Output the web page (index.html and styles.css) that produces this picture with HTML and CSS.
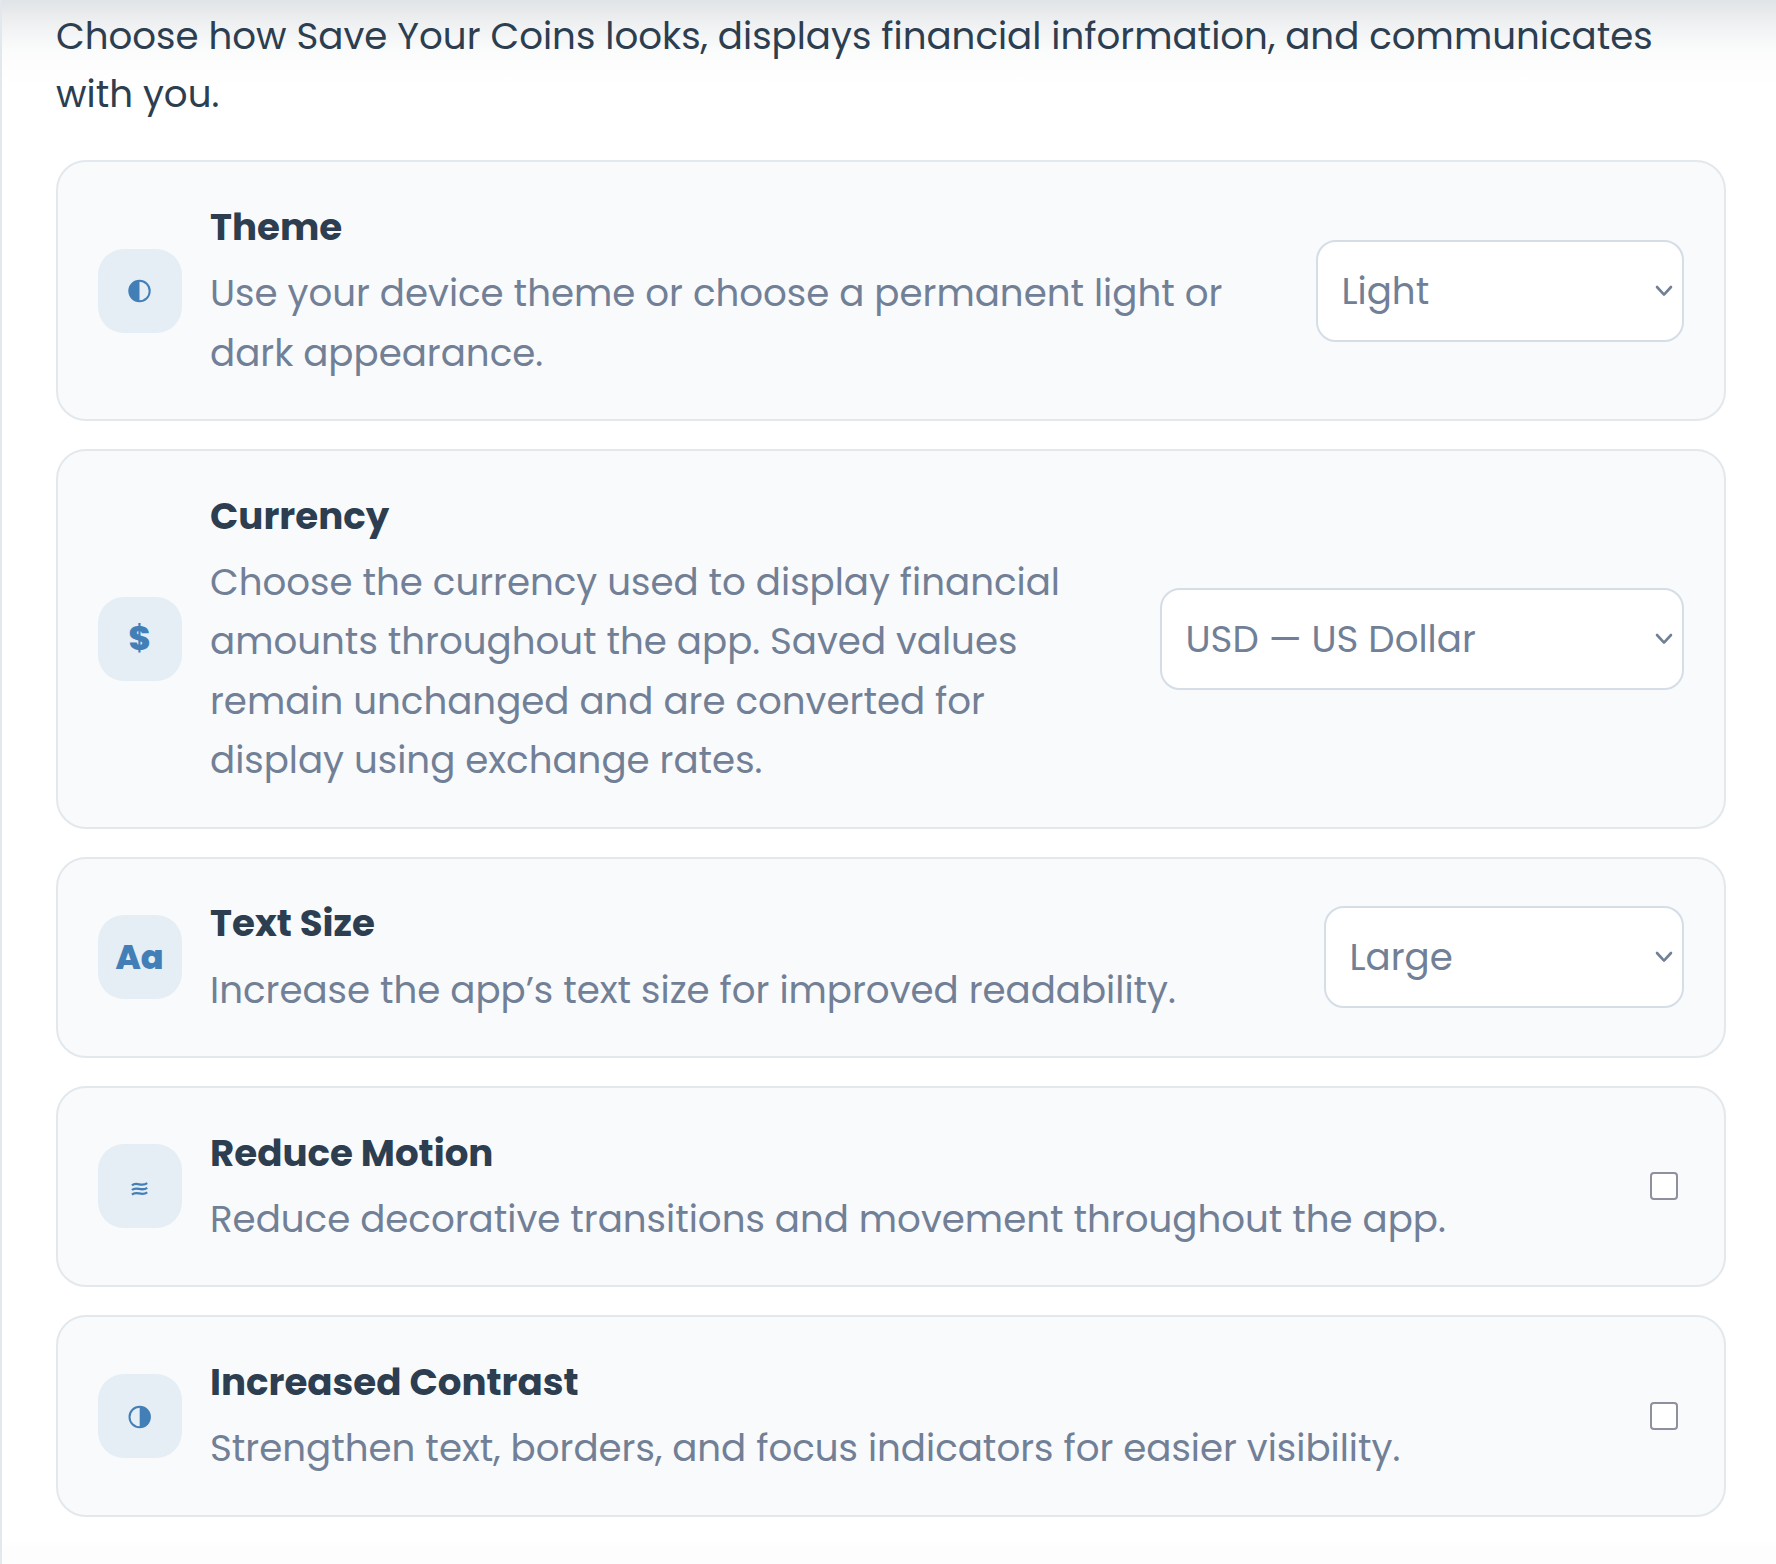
FILE: index.html
```html
<!DOCTYPE html>
<html lang="en">
<head>
<meta charset="utf-8" />
<title>Preferences - Save Your Coins</title>
<link rel="stylesheet" href="styles.css">
</head>
<body>
<main class="settings">
  <p class="intro">Choose how Save Your Coins looks, displays financial information, and communicates with you.</p>

  <section class="card">
    <span class="icon">
      <svg width="24" height="24" viewBox="0 0 24 24"><circle cx="11.5" cy="12" r="10.2" fill="none" stroke="currentColor" stroke-width="2"/><path d="M11.5 1.5a10.5 10.5 0 0 0 0 21z" fill="currentColor"/></svg>
    </span>
    <div class="text">
      <h2>Theme</h2>
      <p>Use your device theme or choose a permanent light or<br>dark appearance.</p>
    </div>
    <label class="select theme">
      <select><option>Light</option><option>Dark</option></select>
      <svg width="18" height="12" viewBox="0 0 18 12"><path d="M2 2l7 7.6L16 2" /></svg>
    </label>
  </section>

  <section class="card">
    <span class="icon letters">$</span>
    <div class="text">
      <h2>Currency</h2>
      <p>Choose the currency used to display financial<br>amounts throughout the app. Saved values<br>remain unchanged and are converted for<br>display using exchange rates.</p>
    </div>
    <label class="select currency">
      <select><option>USD — US Dollar</option></select>
      <svg width="18" height="12" viewBox="0 0 18 12"><path d="M2 2l7 7.6L16 2" /></svg>
    </label>
  </section>

  <section class="card">
    <span class="icon letters">Aa</span>
    <div class="text">
      <h2>Text Size</h2>
      <p>Increase the app’s text size for improved readability.</p>
    </div>
    <label class="select size">
      <select><option>Large</option></select>
      <svg width="18" height="12" viewBox="0 0 18 12"><path d="M2 2l7 7.6L16 2" /></svg>
    </label>
  </section>

  <section class="card">
    <span class="icon waves">
      <svg width="18" height="14" viewBox="0 0 18 14" fill="none" stroke="currentColor" stroke-width="2.3"><path d="M1 3.4C5.5-1 10.500 5.600 16.200 1.200M1 8C5.500 3.600 10.500 10.200 16.200 5.800M1 12.600C5.500 8.200 10.500 14.800 16.200 10.400"/></svg>
    </span>
    <div class="text">
      <h2>Reduce Motion</h2>
      <p>Reduce decorative transitions and movement throughout the app.</p>
    </div>
    <input type="checkbox">
  </section>

  <section class="card">
    <span class="icon low">
      <svg width="24" height="24" viewBox="0 0 24 24"><circle cx="11.7" cy="12" r="10.2" fill="none" stroke="currentColor" stroke-width="2"/><path d="M11.7 1.500a10.5 10.5 0 0 1 0 21z" fill="currentColor"/></svg>
    </span>
    <div class="text">
      <h2>Increased Contrast</h2>
      <p>Strengthen text, borders, and focus indicators for easier visibility.</p>
    </div>
    <input type="checkbox">
  </section>
</main>
</body>
</html>
```

FILE: styles.css
```css
* {
  box-sizing: border-box;
}
body {
  margin: 0;
  background: #fff;
  color: #2c3e50;
  font-family: Poppins, "Open Sans", sans-serif;
  font-size: 37.2px;
}
.settings {
  height: 1564px;
  overflow: hidden;
  padding: 8px 50px 0 54px;
  border-left: 2px solid #e2e8ec;
  background: linear-gradient(#e0e4e7 0, #e9ebec 14px, #f2f3f4 30px, #fafbfb 50px, #fdfdfd 64px, #fff 84px, #fff 1538px, #fdfdfd 1550px);
}
.intro {
  margin: 0 0 37px;
  line-height: 1.55;
}
.card {
  display: flex;
  align-items: center;
  gap: 28px;
  margin-bottom: 27.9px;
  padding: 35.6px 40px 35.9px;
  border: 2px solid #e2e8ec;
  border-radius: 30px;
  background: #f9fafc;
}
.icon {
  display: flex;
  align-items: center;
  justify-content: center;
  flex: none;
  width: 84px;
  height: 84px;
  border-radius: 26px;
  background: #e5edf5;
  color: #437fb7;
  font-size: 33.5px;
  font-weight: 800;
}
.letters {
  padding: 1px 1px 0 0;
}
.low {
  padding-top: 3px;
}
.waves {
  padding-top: 5px;
}
.text {
  flex: 1;
  min-width: 0;
  line-height: 1.6;
  white-space: nowrap;
}
.text h2 {
  margin: 0 0 6.8px;
  font-size: 37.2px;
  font-weight: 700;
}
.text p {
  margin: 0;
  color: #718096;
}
.select {
  display: grid;
  flex: none;
  align-items: center;
  height: 102px;
}
.select select,
.select svg {
  grid-area: 1 / 1;
}
.select select {
  width: 100%;
  height: 102px;
  padding: 0 24px 0 23.5px;
  border: 2px solid #d5dde6;
  border-radius: 20px;
  background: #fff;
  color: #718096;
  font: inherit;
  -webkit-appearance: none;
  appearance: none;
}
.select svg {
  justify-self: end;
  margin-right: 11px;
  fill: none;
  stroke: #718096;
  stroke-width: 2.6;
  stroke-linecap: round;
  stroke-linejoin: round;
}
.theme {
  width: 368px;
}
.currency {
  width: 524px;
}
.size {
  width: 360px;
}
input[type=checkbox] {
  flex: none;
  width: 28px;
  height: 28px;
  margin: 0 6px 0 0;
  border: 2px solid #8f8f9d;
  border-radius: 4px;
  background: #fff;
  -webkit-appearance: none;
  appearance: none;
}
```
